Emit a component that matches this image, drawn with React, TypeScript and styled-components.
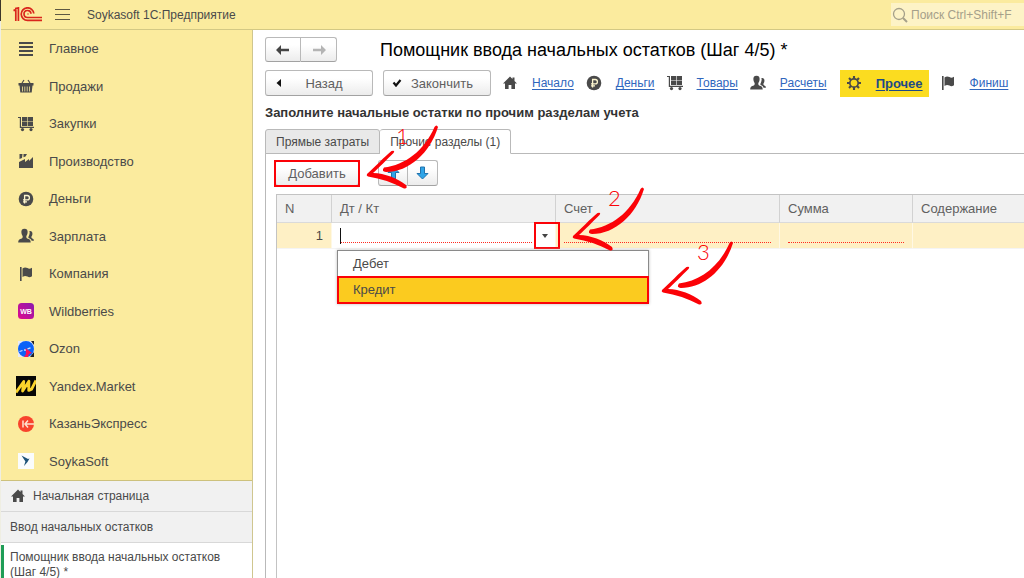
import React from "react";
import styled, { createGlobalStyle, css } from "styled-components";

const yellow = "#fbeb9e";
const ink = "#4a4a4a";
const red = "#fb0207";

const GlobalStyle = createGlobalStyle`
  *, *::before, *::after { box-sizing: border-box; }
  body { margin: 0; background: #fff; }
  body, button, input, table { font-family: "Liberation Sans", Arial, sans-serif; font-size: 13px; color: ${ink}; }
`;

const Shell = styled.div`
  display: flex;
  flex-direction: column;
  height: 100vh;
  overflow: hidden;
  padding-left: 1px;
  background: linear-gradient(#3c362a 0 21px, #efeee2 21px);
`;

const Header = styled.header`
  display: flex;
  flex: none;
  align-items: center;
  height: 30px;
  padding-left: 12px;
  background: ${yellow};
  border-bottom: 1px solid #d3c884;
`;

const MenuButton = styled.button`
  display: flex;
  margin: 0 17px 0 12px;
  padding: 0;
  border: 0;
  background: none;
`;

const AppName = styled.div`
  flex: 1;
  font-size: 12px;
`;

const Search = styled.label`
  display: flex;
  align-items: center;
  width: 133px;
  height: 23px;
  padding-left: 1px;
  gap: 3px;
  background: #fdf3c6;
`;

const SearchInput = styled.input`
  flex: 1;
  min-width: 0;
  padding: 0;
  border: 0;
  background: none;
  outline: 0;
  font-size: 12px;
  &::placeholder { color: #a5a08a; opacity: 1; }
`;

const Body = styled.div`
  display: flex;
  flex: 1;
  min-height: 0;
`;

const Sidebar = styled.aside`
  display: flex;
  flex: none;
  flex-direction: column;
  width: 252px;
  background: #fff;
  border-right: 1px solid #cfc68f;
`;

const Sections = styled.nav`
  display: grid;
  flex: none;
  grid-auto-rows: 1fr;
  height: 451px;
  background: ${yellow};
  border-bottom: 1px solid #cdc17c;
`;

const Section = styled.a`
  display: flex;
  align-items: center;
  gap: 13px;
  padding-left: 15px;
  color: ${ink};
  text-decoration: none;
`;

const IconBox = styled.span`
  display: flex;
  flex: none;
  justify-content: center;
  width: 20px;
`;

const OpenPage = styled.a<{ $active?: boolean }>`
  display: flex;
  flex: none;
  align-items: center;
  gap: 7px;
  padding: 7px 9px;
  font-size: 12px;
  line-height: 15px;
  min-height: 31px;
  color: ${ink};
  text-decoration: none;
  background: #f1f1f1;
  border-bottom: 1px solid #d8d8d8;
  ${(p) =>
    p.$active &&
    css`
      margin-top: 2px;
      padding: 5px 6px;
      background: #fff;
      border-left: 3px solid #1f9d57;
    `}
`;

const Main = styled.main`
  display: flex;
  flex: 1;
  flex-direction: column;
  min-width: 0;
  padding: 7px 0 0 12px;
  background: #fff;
`;

const TitleRow = styled.div`
  display: flex;
  flex: none;
  align-items: center;
  gap: 43px;
  height: 25px;
`;

const Title = styled.h1`
  margin: 0;
  color: #000;
  font-size: 18px;
  font-weight: 400;
  line-height: 24px;
  white-space: nowrap;
`;

const Button = styled.button`
  display: flex;
  align-items: center;
  justify-content: center;
  height: 26px;
  padding: 0 8px;
  border: 1px solid #b9b9b9;
  border-bottom-color: #a2a2a2;
  border-radius: 3px;
  background: linear-gradient(#fff 30%, #ececec);
  color: #606060;
`;

const CommandButton = styled(Button)`
  flex: none;
  width: 108px;
  > span { flex: 1; text-align: center; }
`;

const AddButton = styled(Button)`
  width: 84px;
`;

const Pair = styled.div<{ $wide?: boolean }>`
  display: flex;
  ${Button} {
    width: ${(p) => (p.$wide ? 36 : 30)}px;
    height: ${(p) => (p.$wide ? 25 : 26)}px;
    padding: 0;
  }
  ${Button}:first-child { border-radius: 3px 0 0 3px; }
  ${Button}:last-child { border-left: 0; border-radius: 0 3px 3px 0; }
`;

const StepRow = styled.div`
  display: flex;
  flex: none;
  align-items: center;
  gap: 10px;
  margin-top: 7px;
  height: 28px;
`;

const Steps = styled.nav`
  display: flex;
  margin-left: -5px;
`;

const Step = styled.a<{ $active?: boolean }>`
  display: flex;
  align-items: center;
  gap: 14px;
  height: 27px;
  padding: 0 6px;
  color: #2f66bd;
  font-size: 12px;
  text-underline-offset: 2px;
  ${(p) =>
    p.$active &&
    css`
      margin: 0 5px 0 7px;
      background: #fbdc20;
      color: #1d4a86;
      font-size: 13px;
      font-weight: 700;
    `}
`;

const Hint = styled.p`
  flex: none;
  margin: 8px 0;
  color: #333;
  font-weight: 700;
  line-height: 16px;
`;

const Tabs = styled.div`
  display: flex;
  flex: none;
  height: 25px;
  border-bottom: 1px solid #b9b9b9;
`;

const Tab = styled.button<{ $active?: boolean }>`
  height: 25px;
  padding: 0 10px;
  border: 1px solid #b9b9b9;
  border-radius: 3px 3px 0 0;
  background: #e9e9e9;
  font-size: 12px;
  white-space: nowrap;
  & + & { border-left: 0; }
  ${(p) =>
    p.$active &&
    css`
      background: #fff;
      border-bottom-color: #fff;
    `}
`;

const Panel = styled.section`
  display: flex;
  flex: 1;
  flex-direction: column;
  min-height: 0;
  padding: 6px 0 0 9px;
  border-left: 1px solid #b9b9b9;
`;

const Toolbar = styled.div`
  display: flex;
  flex: none;
  align-items: center;
  gap: 19px;
`;

const Marked = styled.div`
  position: relative;
`;

const Ring = styled.span`
  position: absolute;
  inset: 0 -1px -1px -1px;
  border: 2px solid ${red};
  pointer-events: none;
`;

const ComboRing = styled(Ring)`
  inset: -1px -5px -1px -1px;
`;

const TableFrame = styled.div`
  flex: 1;
  margin: 8px 0 0 1px;
  border: solid #c3c3c3;
  border-width: 1px 0 0 1px;
`;

const Table = styled.table`
  width: 100%;
  table-layout: fixed;
  border-collapse: separate;
  border-spacing: 0;
`;

const Col = styled.col<{ $w?: number }>`
  width: ${(p) => (p.$w ? `${p.$w}px` : "auto")};
`;

const Th = styled.th`
  height: 28px;
  padding: 0 8px;
  background: #f1f1f1;
  border-bottom: 1px solid #dadada;
  color: #606060;
  font-weight: 400;
  text-align: left;
  & + & { border-left: 1px solid #d2d2d2; }
`;

const Td = styled.td<{ $editing?: boolean; $right?: boolean }>`
  height: 26px;
  padding: 0 ${(p) => (p.$editing ? 0 : 8)}px 0 8px;
  background: ${(p) => (p.$editing ? "#fff" : "#fef0c5")};
  border-bottom: 1px solid #f4f4f4;
  text-align: ${(p) => (p.$right ? "right" : "left")};
  & + & { border-left: 1px solid #fff8e4; }
`;

const Combo = styled.div`
  position: relative;
  display: flex;
  align-items: center;
  height: 25px;
`;

const Caret = styled.span`
  width: 1px;
  height: 16px;
  background: #111;
`;

const Field = styled.input`
  display: block;
  flex: 1;
  width: 100%;
  min-width: 0;
  height: 15px;
  margin: 0;
  padding: 0;
  border: 0;
  border-bottom: 1px dotted #ff2a20;
  background: none;
  outline: 0;
`;

const OpenButton = styled.button`
  display: flex;
  align-items: center;
  justify-content: center;
  width: 20px;
  height: 25px;
  padding: 0;
  border: 0;
  background: #fff;
`;

const ComboAction = styled(Marked)`
  margin-left: 3px;
`;

const OptionList = styled.ul`
  position: absolute;
  z-index: 1;
  top: 27px;
  left: -3px;
  width: 312px;
  margin: 0;
  padding: 0;
  list-style: none;
  background: #fff;
  border: 1px solid #8a8a8a;
  box-shadow: 0 0 3px #bbb;
`;

const Option = styled.li<{ $selected?: boolean }>`
  position: relative;
  padding: 0 15px;
  line-height: 26px;
  ${(p) => p.$selected && css`background: #fbcb1f;`}
`;

const OptionRing = styled(Ring)`
  inset: -1px;
`;

const Arrow = styled.svg<{ $far?: boolean }>`
  position: absolute;
  z-index: 2;
  left: calc(100% + ${(p) => (p.$far ? 15 : 8)}px);
  top: ${(p) => (p.$far ? -38 : -36)}px;
  overflow: visible;
  pointer-events: none;
`;

const Callout = ({ n, far }: { n: number; far?: boolean }) => (
  <Arrow $far={far} width="74" height="64" viewBox="0 0 74 64" fill={red}>
    <path d="M17 43.500C38 41 57 27 67.500 3q2-3 3.500 0C63 29 42 48 19 48q-5-.5-2-4.500Z" />
    <path d="M0 50C8 43 17 33 24.500 27q4-1 2 2C20 35 12 44 6 49 18 49.500 30 54 39 61q2 4-2 3.500C26 58.500 14 54.500 1 52.500q-2-.8-1-2.500Z" />
    <text x={n === 1 ? 29 : 35} y="20" fontFamily="Lato, sans-serif" fontWeight="300" fontSize="22">
      {n}
    </text>
  </Arrow>
);

type IconName = "list" | "basket" | "cart" | "factory" | "ruble" | "users" | "flag" | "home" | "gear" | "wb" | "ozon" | "market" | "ke" | "soyka";

const shapes: Record<IconName, React.ReactNode> = {
  list: <path d="M1 2h14M1 6h14M1 10h14M1 14h14" stroke="#4a4a4a" strokeWidth="1.800" />,
  basket: (
    <>
      <path d="M.5 5h15v2.500H.5ZM1.500 7.500h13l-.8 7H2.300Z" />
      <path d="M4 5 6 2M12 5l-2-3" stroke="#4a4a4a" strokeWidth="1.200" />
      <path d="M4.500 8.500v5M6.800 8.500v5M9.200 8.500v5M11.500 8.500v5" stroke={yellow} strokeWidth=".8" />
    </>
  ),
  cart: (
    <>
      <path d="M4 1h5.200v4.200H4ZM9.800 1H15v4.200H9.800ZM4 5.800h5.200V10H4ZM9.800 5.800H15V10H9.800Z" />
      <path d="M0 1.500h2.400v9.800H16" fill="none" stroke="#4a4a4a" strokeWidth="1.200" />
      <circle cx="4.500" cy="13.600" r="1.600" />
      <circle cx="13" cy="13.600" r="1.600" />
    </>
  ),
  factory: <path d="M1 15V9l6-3v3l4-3v2l4-4v11ZM1.500 1h3l-.5 4-2.500 1ZM5.500 1H9L7.500 3.500l-2 .8Z" />,
  ruble: (
    <>
      <circle cx="8" cy="8" r="7.300" />
      <path d="M6.600 12.500v-8h2.600a2.200 2.200 0 0 1 0 4.400H5M5 10.800h4" fill="none" stroke="#fdf6cf" strokeWidth="1.300" />
    </>
  ),
  users: (
    <>
      <path d="M6.500.8C9 .8 9.800 2.300 9.600 4.500 9.500 6.400 8.700 7.500 8.300 8.200c0 1.600.3 2 1.700 2.600 2 .8 2.600 1.400 2.700 3.700H.2c.1-2.300.8-2.900 2.800-3.700 1.400-.6 1.700-1 1.700-2.600C4.300 7.500 3.500 6.400 3.400 4.500 3.200 2.300 4 .8 6.500.8Z" />
      <path d="M10.600 3.200c2.800-.9 4.100.5 3.800 3-.1 1.200-.7 1.900-1 2.500 0 1 .2 1.400 1 1.800 1 .5 1.500 1 1.500 2.300h-2.300c-.5-1.400-1.500-2.200-3-2.800-.5-.5-.2-1.400.3-2.300.6-1.300.9-2.700.7-4.500Z" />
    </>
  ),
  flag: <path d="M2 1h1.600v14H2ZM4.500 2.500C6.500 1 7.800 1.200 9.500 2.100c1.500.8 2.500.8 4.500-.4v8.500c-2 1.200-3 1.200-4.500.4-1.700-.9-3-1.100-5 .4Z" />,
  home: <path d="M8 1.500 1 8.400h2V14h3.600v-4h2.800v4H13V8.400h2L12.500 6V2.500h-2v1.600Z" />,
  gear: (
    <>
      <circle cx="8" cy="8" r="4.200" fill="none" stroke="#4a4a4a" strokeWidth="1.700" />
      <path d="M8 1v3M8 12v3M1 8h3M12 8h3M3 3l2.200 2.200M10.800 10.800 13 13M3 13l2.200-2.200M10.800 5.200 13 3" stroke="#4a4a4a" strokeWidth="2.100" />
    </>
  ),
  wb: (
    <>
      <defs>
        <linearGradient id="wbFill" x1="0" x2="1" y1="1" y2="0">
          <stop stopColor="#e00a8d" />
          <stop offset="1" stopColor="#8a1bb0" />
        </linearGradient>
      </defs>
      <rect width="16" height="16" rx="3.500" fill="url(#wbFill)" />
      <text x="8" y="10.500" textAnchor="middle" fill="#fff" fontSize="7" fontWeight="700">WB</text>
    </>
  ),
  ozon: (
    <>
      <rect width="16" height="16" fill="#e8eaf5" />
      <path d="M13 0h3v4ZM16 11v5h-4Z" fill="#222" />
      <circle cx="8" cy="8" r="8" fill="#0b62f8" />
      <path d="M7.500 7l6.500 5-3 1-1 3H6l2-3Z" fill="#f5125c" />
      <path d="M1.500 10.500l3-1M6 9l2 .2M9.500 7.800l3-1" stroke="#cfe0ff" strokeWidth="1.300" />
    </>
  ),
  market: (
    <>
      <rect width="16" height="16" fill="#070707" />
      <path d="M0 13.200 6.200 4.400 5.300 12 10.300 4.200 10.200 11.500 12.500 10.500 16 3.500" fill="none" stroke="#fbd42c" strokeWidth="2.300" strokeLinejoin="round" />
    </>
  ),
  ke: (
    <>
      <circle cx="8" cy="8" r="8" fill="#f8432c" />
      <path d="M5 4.500v7M10 4.500 7 8l3 3.500M7 8h9" fill="none" stroke="#fde3d0" strokeWidth="1.500" />
    </>
  ),
  soyka: (
    <>
      <rect width="16" height="16" fill="#fafcfd" />
      <path d="M3.500 2.500 10 6l1.500-.4L9.500 9 6 13l1.400-4.500Z" fill="#1d5379" />
    </>
  ),
};

const Icon = ({ name, size = 16 }: { name: IconName; size?: number }) => (
  <svg width={size} height={size} viewBox="0 0 16 16" fill="#4a4a4a" aria-hidden="true">
    {shapes[name]}
  </svg>
);

const ArrowGlyph = ({ color, flip }: { color: string; flip?: boolean }) => (
  <svg width="14" height="10" viewBox="0 0 14 10" fill={color} aria-hidden="true">
    <path d={flip ? "M14 5 9 0v3.800H1v2.400h8V10Z" : "M0 5l5-5v3.800h8v2.400H5V10Z"} />
  </svg>
);

const MoveGlyph = ({ down }: { down?: boolean }) => (
  <svg width="13" height="14" viewBox="0 0 13 14" fill="#2fa4e7" stroke="#2273ad" aria-hidden="true">
    <path d={down ? "M6.500 13 1 7.500h3.500V1h4v6.500H12Z" : "M6.500 1 1 6.500h3.500V13h4V6.500H12Z"} />
  </svg>
);

const sections: { icon: IconName; label: string; size?: number }[] = [
  { icon: "list", label: "Главное" },
  { icon: "basket", label: "Продажи" },
  { icon: "cart", label: "Закупки" },
  { icon: "factory", label: "Производство" },
  { icon: "ruble", label: "Деньги" },
  { icon: "users", label: "Зарплата" },
  { icon: "flag", label: "Компания" },
  { icon: "wb", label: "Wildberries" },
  { icon: "ozon", label: "Ozon" },
  { icon: "market", label: "Yandex.Market", size: 20 },
  { icon: "ke", label: "КазаньЭкспресс" },
  { icon: "soyka", label: "SoykaSoft" },
];

const steps: { icon: IconName; label: string; active?: boolean }[] = [
  { icon: "home", label: "Начало" },
  { icon: "ruble", label: "Деньги" },
  { icon: "cart", label: "Товары" },
  { icon: "users", label: "Расчеты" },
  { icon: "gear", label: "Прочее", active: true },
  { icon: "flag", label: "Финиш" },
];

export default function App() {
  return (
    <Shell>
      <GlobalStyle />
      <Header>
        <svg width="30" height="15" viewBox="0 0 30 15" fill="none" stroke="#d9261c" strokeWidth="1.700" role="img" aria-label="1С">
          <path d="M.5 3.600 2.800 2.600V14M2 1.500 5.400.9V14" />
          <path d="M20.800 6.500A6.300 6.300 0 1 0 14.500 13.400H29M18 6.800a3.500 3.500 0 1 0-3.500 3.700H29M14.500 7h1" />
        </svg>
        <MenuButton aria-label="Меню">
          <svg width="15" height="13" viewBox="0 0 15 13" stroke="#5d5842" strokeWidth="1">
            <path d="M0 1.500h15M0 6.500h15M0 11.500h15" />
          </svg>
        </MenuButton>
        <AppName>Soykasoft 1С:Предприятие</AppName>
        <Search>
          <svg width="16" height="16" viewBox="0 0 16 16" fill="none" stroke="#a5a08a" aria-hidden="true">
            <circle cx="7" cy="7" r="5.500" strokeWidth="1.300" />
            <path d="m11 11 4 4" strokeWidth="2" />
          </svg>
          <SearchInput placeholder="Поиск Ctrl+Shift+F" aria-label="Поиск" />
        </Search>
      </Header>
      <Body>
        <Sidebar>
          <Sections>
            {sections.map((s) => (
              <Section href="#" key={s.label}>
                <IconBox>
                  <Icon name={s.icon} size={s.size} />
                </IconBox>
                {s.label}
              </Section>
            ))}
          </Sections>
          <OpenPage href="#">
            <Icon name="home" />
            Начальная страница
          </OpenPage>
          <OpenPage href="#">Ввод начальных остатков</OpenPage>
          <OpenPage href="#" $active>
            Помощник ввода начальных остатков (Шаг 4/5) *
          </OpenPage>
        </Sidebar>
        <Main>
          <TitleRow>
            <Pair $wide>
              <Button aria-label="Назад по истории"><ArrowGlyph color="#444" /></Button>
              <Button aria-label="Вперед по истории"><ArrowGlyph color="#b4b4b4" flip /></Button>
            </Pair>
            <Title>Помощник ввода начальных остатков (Шаг 4/5) *</Title>
          </TitleRow>
          <StepRow>
            <CommandButton>
              <svg width="10" height="8" viewBox="0 0 10 8" aria-hidden="true"><path d="M7 0v8L2.500 4Z" fill="#111" /></svg>
              <span>Назад</span>
            </CommandButton>
            <CommandButton>
              <svg width="10" height="8" viewBox="0 0 10 8" aria-hidden="true"><path d="m1.500 3.500 2.500 3L8.500 1" fill="none" stroke="#111" strokeWidth="2.200" /></svg>
              <span>Закончить</span>
            </CommandButton>
            <Steps>
              {steps.map((s) => (
                <Step href="#" key={s.label} $active={s.active}>
                  <Icon name={s.icon} />
                  {s.label}
                </Step>
              ))}
            </Steps>
          </StepRow>
          <Hint>Заполните начальные остатки по прочим разделам учета</Hint>
          <Tabs role="tablist">
            <Tab role="tab">Прямые затраты</Tab>
            <Tab role="tab" aria-selected $active>Прочие разделы (1)</Tab>
          </Tabs>
          <Panel>
            <Toolbar>
              <Marked>
                <AddButton>Добавить</AddButton>
                <Ring />
                <Callout n={1} />
              </Marked>
              <Pair>
                <Button aria-label="Вверх"><MoveGlyph /></Button>
                <Button aria-label="Вниз"><MoveGlyph down /></Button>
              </Pair>
            </Toolbar>
            <TableFrame>
              <Table>
                <colgroup>
                  <Col $w={54} />
                  <Col $w={224} />
                  <Col $w={224} />
                  <Col $w={133} />
                  <Col />
                </colgroup>
                <thead>
                  <tr>
                    <Th>N</Th>
                    <Th>Дт / Кт</Th>
                    <Th>Счет</Th>
                    <Th>Сумма</Th>
                    <Th>Содержание</Th>
                  </tr>
                </thead>
                <tbody>
                  <tr>
                    <Td $right>1</Td>
                    <Td $editing>
                      <Combo>
                        <Caret />
                        <Field aria-label="Дт / Кт" />
                        <ComboAction>
                          <OpenButton aria-label="Открыть список">
                            <svg width="6" height="4" viewBox="0 0 6 4" aria-hidden="true"><path d="M0 0h6L3 4Z" fill="#444" /></svg>
                          </OpenButton>
                          <ComboRing>
                            <Callout n={2} far />
                          </ComboRing>
                        </ComboAction>
                        <OptionList role="listbox">
                          <Option role="option">Дебет</Option>
                          <Option role="option" aria-selected $selected>
                            Кредит
                            <OptionRing>
                              <Callout n={3} far />
                            </OptionRing>
                          </Option>
                        </OptionList>
                      </Combo>
                    </Td>
                    <Td><Field aria-label="Счет" /></Td>
                    <Td><Field aria-label="Сумма" /></Td>
                    <Td />
                  </tr>
                </tbody>
              </Table>
            </TableFrame>
          </Panel>
        </Main>
      </Body>
    </Shell>
  );
}
